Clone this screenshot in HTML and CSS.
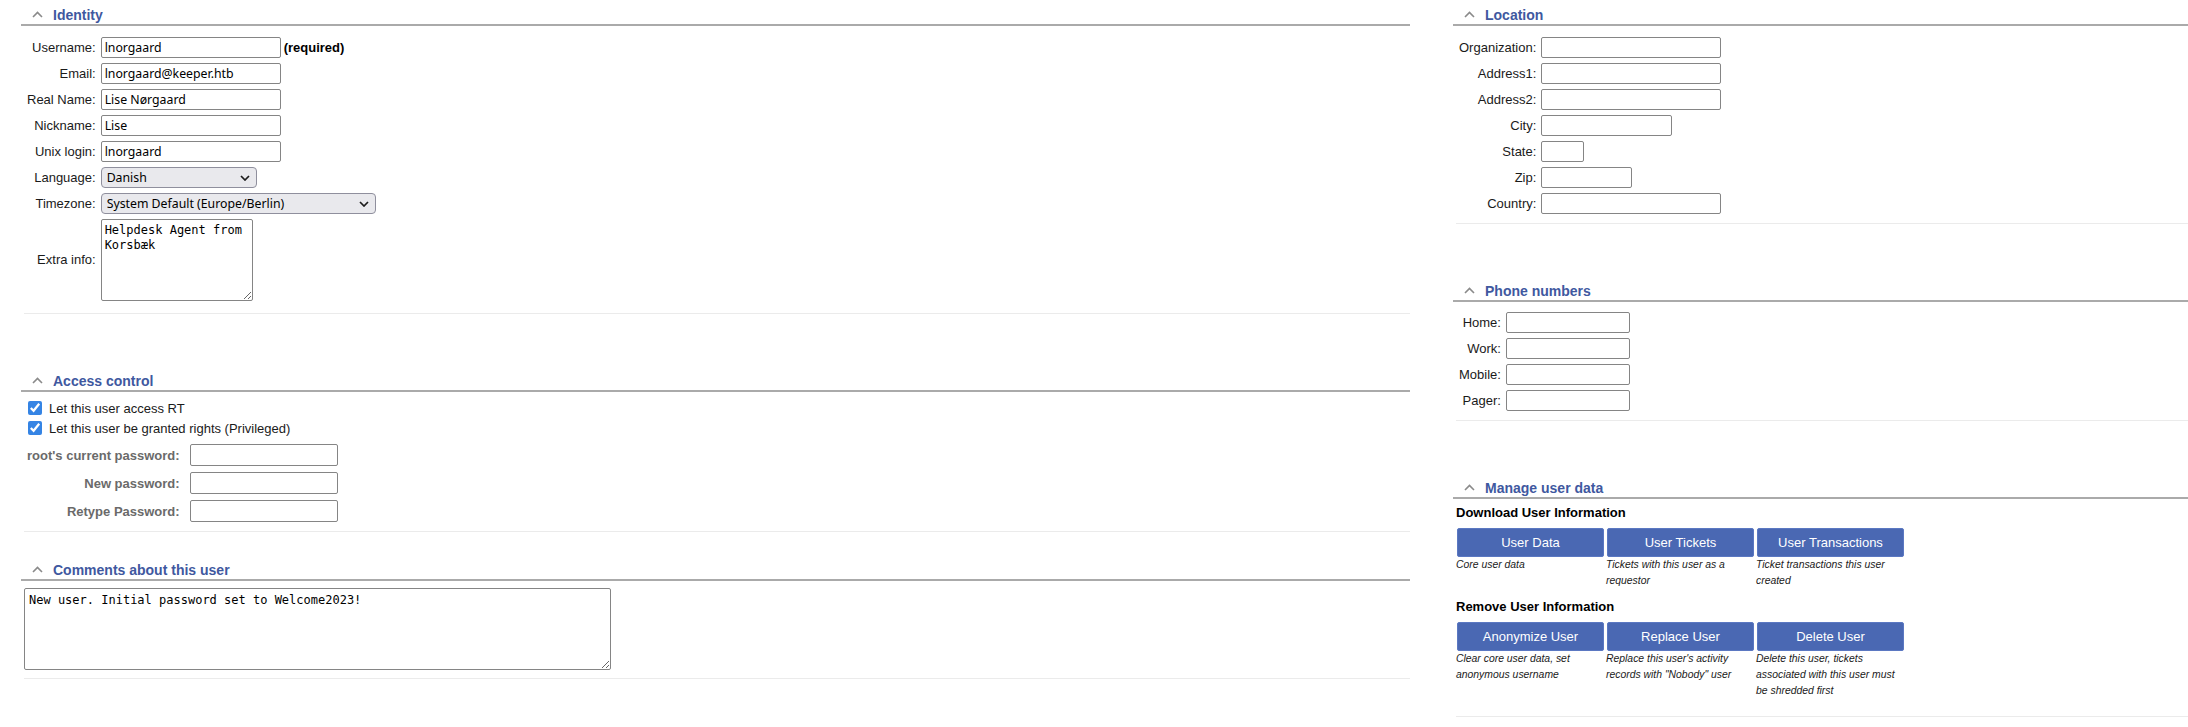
FILE: index.html
```html
<!DOCTYPE html>
<html lang="en">
<head>
<meta charset="utf-8">
<title>User: lnorgaard</title>
<link rel="stylesheet" href="styles.css">
</head>
<body>
<div class="page">
  <div class="col">
    <section class="box">
      <h2 class="box-title"><span class="chev"><svg width="11" height="7" viewBox="0 0 11 7"><path d="M1 6 L5.5 1.5 L10 6" fill="none" stroke="#8a8a8a" stroke-width="1.6"/></svg></span><span>Identity</span></h2>
      <div class="box-body body-identity">
        <div class="form-grid">
          <label class="lbl">Username:</label>
          <div class="val"><input class="txt w180" type="text" value="lnorgaard"><span class="req">(required)</span></div>
          <label class="lbl">Email:</label>
          <div class="val"><input class="txt w180" type="text" value="lnorgaard@keeper.htb"></div>
          <label class="lbl">Real Name:</label>
          <div class="val"><input class="txt w180" type="text" value="Lise Nørgaard"></div>
          <label class="lbl">Nickname:</label>
          <div class="val"><input class="txt w180" type="text" value="Lise"></div>
          <label class="lbl">Unix login:</label>
          <div class="val"><input class="txt w180" type="text" value="lnorgaard"></div>
          <label class="lbl">Language:</label>
          <div class="val"><span class="sel-wrap"><select class="sel w156"><option>Danish</option></select><svg class="sel-arrow" width="10" height="6" viewBox="0 0 10 6"><path d="M1 1 L5 5 L9 1" fill="none" stroke="#1c1c1c" stroke-width="1.7"/></svg></span></div>
          <label class="lbl">Timezone:</label>
          <div class="val"><span class="sel-wrap"><select class="sel w275"><option>System Default (Europe/Berlin)</option></select><svg class="sel-arrow" width="10" height="6" viewBox="0 0 10 6"><path d="M1 1 L5 5 L9 1" fill="none" stroke="#1c1c1c" stroke-width="1.7"/></svg></span></div>
          <label class="lbl">Extra info:</label>
          <div class="val"><textarea class="area area-extra">Helpdesk Agent from
Korsbæk</textarea></div>
        </div>
      </div>
    </section>

    <section class="box box-gap">
      <h2 class="box-title"><span class="chev"><svg width="11" height="7" viewBox="0 0 11 7"><path d="M1 6 L5.5 1.5 L10 6" fill="none" stroke="#8a8a8a" stroke-width="1.6"/></svg></span><span>Access control</span></h2>
      <div class="box-body body-access">
        <div class="check-row"><input class="chk" type="checkbox" checked><span>Let this user access RT</span></div>
        <div class="check-row"><input class="chk" type="checkbox" checked><span>Let this user be granted rights (Privileged)</span></div>
        <div class="pw-grid">
          <label class="pw-lbl">root's current password:</label>
          <div class="val"><input class="txt pw" type="password"></div>
          <label class="pw-lbl">New password:</label>
          <div class="val"><input class="txt pw" type="password"></div>
          <label class="pw-lbl">Retype Password:</label>
          <div class="val"><input class="txt pw" type="password"></div>
        </div>
      </div>
    </section>

    <section class="box box-gap-small">
      <h2 class="box-title"><span class="chev"><svg width="11" height="7" viewBox="0 0 11 7"><path d="M1 6 L5.5 1.5 L10 6" fill="none" stroke="#8a8a8a" stroke-width="1.6"/></svg></span><span>Comments about this user</span></h2>
      <div class="box-body body-comments">
        <textarea class="area area-comments">New user. Initial password set to Welcome2023!</textarea>
      </div>
    </section>
  </div>

  <div class="col">
    <section class="box">
      <h2 class="box-title"><span class="chev"><svg width="11" height="7" viewBox="0 0 11 7"><path d="M1 6 L5.5 1.5 L10 6" fill="none" stroke="#8a8a8a" stroke-width="1.6"/></svg></span><span>Location</span></h2>
      <div class="box-body body-location">
        <div class="form-grid">
          <label class="lbl">Organization:</label>
          <div class="val"><input class="txt w180" type="text"></div>
          <label class="lbl">Address1:</label>
          <div class="val"><input class="txt w180" type="text"></div>
          <label class="lbl">Address2:</label>
          <div class="val"><input class="txt w180" type="text"></div>
          <label class="lbl">City:</label>
          <div class="val"><input class="txt w131" type="text"></div>
          <label class="lbl">State:</label>
          <div class="val"><input class="txt w43" type="text"></div>
          <label class="lbl">Zip:</label>
          <div class="val"><input class="txt w91" type="text"></div>
          <label class="lbl">Country:</label>
          <div class="val"><input class="txt w180" type="text"></div>
        </div>
      </div>
    </section>

    <section class="box box-gap">
      <h2 class="box-title"><span class="chev"><svg width="11" height="7" viewBox="0 0 11 7"><path d="M1 6 L5.5 1.5 L10 6" fill="none" stroke="#8a8a8a" stroke-width="1.6"/></svg></span><span>Phone numbers</span></h2>
      <div class="box-body body-phone">
        <div class="form-grid">
          <label class="lbl">Home:</label>
          <div class="val"><input class="txt w124" type="text"></div>
          <label class="lbl">Work:</label>
          <div class="val"><input class="txt w124" type="text"></div>
          <label class="lbl">Mobile:</label>
          <div class="val"><input class="txt w124" type="text"></div>
          <label class="lbl">Pager:</label>
          <div class="val"><input class="txt w124" type="text"></div>
        </div>
      </div>
    </section>

    <section class="box box-gap">
      <h2 class="box-title"><span class="chev"><svg width="11" height="7" viewBox="0 0 11 7"><path d="M1 6 L5.5 1.5 L10 6" fill="none" stroke="#8a8a8a" stroke-width="1.6"/></svg></span><span>Manage user data</span></h2>
      <div class="box-body body-manage">
        <div class="sub-title">Download User Information</div>
        <div class="btn-grid">
          <div class="btn-col"><button class="btn">User Data</button><div class="desc">Core user data</div></div>
          <div class="btn-col"><button class="btn">User Tickets</button><div class="desc">Tickets with this user as a requestor</div></div>
          <div class="btn-col"><button class="btn">User Transactions</button><div class="desc">Ticket transactions this user created</div></div>
        </div>
        <div class="sub-title sub-title-2">Remove User Information</div>
        <div class="btn-grid">
          <div class="btn-col"><button class="btn">Anonymize User</button><div class="desc">Clear core user data, set anonymous username</div></div>
          <div class="btn-col"><button class="btn">Replace User</button><div class="desc">Replace this user's activity records with "Nobody" user</div></div>
          <div class="btn-col"><button class="btn">Delete User</button><div class="desc">Delete this user, tickets associated with this user must be shredded first</div></div>
        </div>
      </div>
    </section>
  </div>
</div>
</body>
</html>
```

FILE: styles.css
```css
* {
  box-sizing: border-box;
}

body {
  margin: 0;
  background: #ffffff;
  color: #111111;
  font-family: "Liberation Sans", Arial, sans-serif;
  font-size: 13px;
}

.page {
  width: 2188px;
  overflow: hidden;
  padding-left: 21px;
  display: grid;
  grid-template-columns: 1389px 1fr;
  column-gap: 43px;
  align-items: start;
}

.col {
  display: flex;
  flex-direction: column;
}

.box-gap {
  margin-top: 52px;
}

.box-gap-small {
  margin-top: 23px;
}

.box-title {
  margin: 0;
  height: 26px;
  padding-top: 6px;
  display: flex;
  align-items: center;
  border-bottom: 2px solid #aaaaaa;
  font-size: 14px;
  line-height: 18px;
  font-weight: bold;
  color: #40589f;
}

.chev {
  width: 32px;
  display: flex;
  justify-content: center;
  align-items: center;
  padding-bottom: 1px;
}

.box-body {
  margin-left: 3px;
  border-bottom: 1px solid #ebebeb;
}

.body-identity {
  padding: 11px 0 12px 0;
}

.body-access {
  padding: 6px 0 9px 0;
}

.body-comments {
  padding: 7px 0 8px 0;
}

.body-location {
  padding: 11px 0 9px 0;
}

.body-phone {
  padding: 10px 0 9px 0;
}

.body-manage {
  padding: 6px 0 17px 0;
}

.form-grid {
  display: grid;
  grid-template-columns: max-content 1fr;
  column-gap: 5px;
  row-gap: 5px;
  align-items: center;
  padding-left: 3px;
}

.lbl {
  text-align: right;
  color: #1a1a1a;
  line-height: 16px;
}

.val {
  display: flex;
  align-items: center;
}

.txt {
  height: 21px;
  margin: 0;
  padding: 0 3px;
  border: 1px solid #858585;
  border-radius: 2px;
  background: #ffffff;
  color: #000000;
  font-family: "Noto Sans", "DejaVu Sans", sans-serif;
  font-size: 12.3px;
}

.w180 { width: 180px; }
.w131 { width: 131px; }
.w124 { width: 124px; }
.w91 { width: 91px; }
.w43 { width: 43px; }

.req {
  margin-left: 3px;
  font-weight: bold;
  color: #000000;
}

.sel-wrap {
  position: relative;
  display: inline-flex;
}

.sel {
  -webkit-appearance: none;
  appearance: none;
  height: 21px;
  margin: 0;
  padding: 0 20px 0 5px;
  border: 1px solid #8f8f9d;
  border-radius: 4px;
  background: #e9e9ed;
  color: #000000;
  font-family: "Noto Sans", "DejaVu Sans", sans-serif;
  font-size: 12.3px;
}

.w156 { width: 156px; }
.w275 { width: 275px; }

.sel-arrow {
  position: absolute;
  right: 7px;
  top: 8px;
  pointer-events: none;
}

.area {
  margin: 0;
  border: 1px solid #858585;
  border-radius: 2px;
  background: #ffffff;
  color: #000000;
  font-family: "DejaVu Sans Mono", "Liberation Mono", monospace;
  font-size: 12px;
  line-height: 15px;
  resize: both;
}

.area-extra {
  width: 152px;
  height: 82px;
  padding: 3px 3px;
}

.area-comments {
  display: block;
  width: 587px;
  height: 82px;
  padding: 4px 4px;
}

.check-row {
  height: 20px;
  display: flex;
  align-items: center;
  color: #1a1a1a;
}

.chk {
  width: 14px;
  height: 14px;
  margin: 0 7px 0 4px;
  accent-color: #3584e4;
}

.pw-grid {
  margin-top: 6px;
  display: grid;
  grid-template-columns: max-content 1fr;
  column-gap: 10px;
  row-gap: 6px;
  align-items: center;
  padding-left: 3px;
}

.pw-lbl {
  text-align: right;
  font-weight: bold;
  color: #6a6a6a;
}

.pw {
  height: 22px;
  width: 148px;
}

.sub-title {
  font-weight: bold;
  line-height: 16px;
  color: #000000;
}

.sub-title-2 {
  margin-top: 10px;
}

.btn-grid {
  margin-top: 7px;
  display: grid;
  grid-template-columns: repeat(3, 150px);
  align-items: start;
}

.btn-col {
  display: flex;
  flex-direction: column;
}

.btn {
  width: 147px;
  height: 29px;
  margin: 0 0 0 1px;
  padding: 0;
  border: 1px solid #5b78c2;
  border-radius: 2px;
  background: #4a68b3;
  color: #ffffff;
  font-family: "Liberation Sans", Arial, sans-serif;
  font-size: 13px;
}

.desc {
  padding-right: 6px;
  font-style: italic;
  font-size: 10.4px;
  line-height: 16px;
  color: #1a1a1a;
}
```
